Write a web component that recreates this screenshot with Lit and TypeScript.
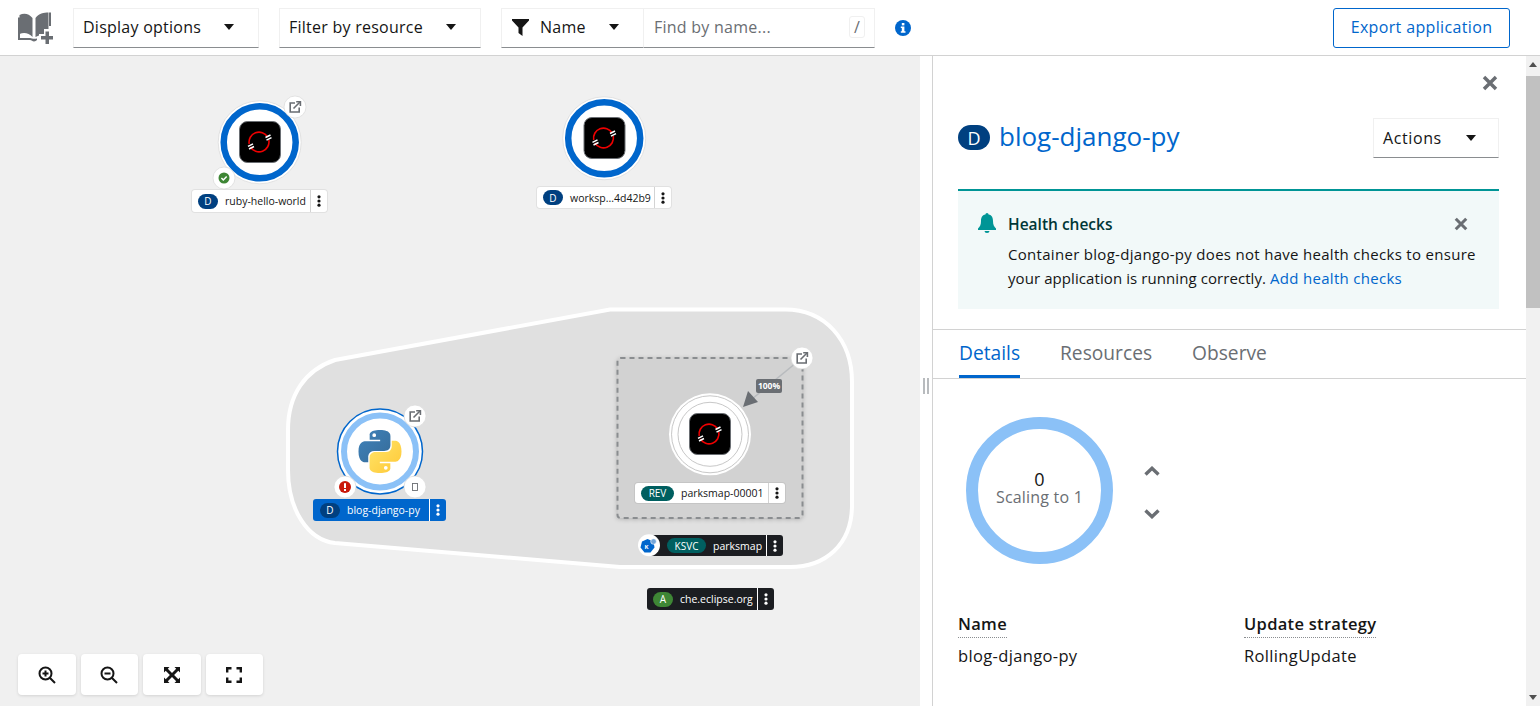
import { LitElement, css, html, svg } from "lit";
import { customElement } from "lit/decorators.js";

interface NodeLabel {
  left: number;
  top: number;
  width: number;
  height: number;
  badge: string;
  badgeWidth: number;
  badgeColor: string;
  badgeOffset: number;
  text: string;
  theme: "light" | "dark" | "selected";
}

const labels: NodeLabel[] = [
  { left: 192, top: 190, width: 135, height: 22, badge: "D", badgeWidth: 20, badgeColor: "#004080", badgeOffset: 6, text: "ruby-hello-world", theme: "light" },
  { left: 537, top: 187, width: 134, height: 21, badge: "D", badgeWidth: 20, badgeColor: "#004080", badgeOffset: 6, text: "worksp...4d42b9", theme: "light" },
  { left: 313, top: 499, width: 133, height: 22, badge: "D", badgeWidth: 20, badgeColor: "#004080", badgeOffset: 7, text: "blog-django-py", theme: "selected" },
  { left: 635, top: 483, width: 150, height: 20, badge: "REV", badgeWidth: 33, badgeColor: "#005f60", badgeOffset: 6, text: "parksmap-00001", theme: "light" },
  { left: 650, top: 535, width: 133, height: 21, badge: "KSVC", badgeWidth: 39, badgeColor: "#005f60", badgeOffset: 17, text: "parksmap", theme: "dark" },
  { left: 647, top: 588, width: 127, height: 22, badge: "A", badgeWidth: 20, badgeColor: "#3e8635", badgeOffset: 6, text: "che.eclipse.org", theme: "dark" },
];

const caret = html`<svg class="caret" width="10" height="6" viewBox="0 0 10 6"><path d="M0 0h10L5 6z" fill="#151515" /></svg>`;

const closeIcon = (size: number) => html`<svg width=${size} height=${size} viewBox="0 0 12 12">
  <path d="M1.500 1.500l9 9M10.500 1.500l-9 9" stroke="#6a6e73" stroke-width="2.600" fill="none" />
</svg>`;

// dark tile with the red ring and white slashes, used by the three image nodes
const tile = (cx: number, cy: number) => svg`
  <rect x=${cx - 20.5} y=${cy - 20.5} width="41" height="41" rx="8" fill="#000" stroke="#6a6e73" stroke-width="1" />
  <g transform="translate(${cx - 1} ${cy})" fill="none">
    <path d="M8.600 -5A10 10 0 0 0 -9.800 2" stroke="#e00" stroke-width="1.600" />
    <path d="M-8.600 5A10 10 0 0 0 9.800 -2" stroke="#e00" stroke-width="1.600" />
    <path d="M6.500 -4.500l5 -2.500M7.500 -1.800l5 -2.500M-11 4.300l5 -2.500M-10 7l5 -2.500" stroke="#fff" stroke-width="1.500" />
  </g>
`;

const decorator = (cx: number, cy: number, inner: unknown) => svg`
  <circle cx=${cx} cy=${cy} r="11" fill="#fff" stroke="#dcdcdc" stroke-width="0.800" />
  ${inner}
`;

const extLink = (cx: number, cy: number) =>
  decorator(
    cx,
    cy,
    svg`<g transform="translate(${cx - 6} ${cy - 6})" fill="none" stroke="#6a6e73" stroke-width="1.600">
      <path d="M6 2H1.200v9h9V6.500" />
      <path d="M4.500 7.500L11 1" />
      <path d="M7.200 .8H11.400V5" />
    </g>`
  );

const pythonLogo = (x: number, y: number, size: number) => {
  const blue =
    "M54.900 0C26.800 0 28.600 12.200 28.600 12.200v12.600h26.800v3.800H17.900S0 26.600 0 55s15.600 27.400 15.600 27.400h9.300V69.200s-.5-15.600 15.400-15.600h26.500s14.900.2 14.900-14.400V15S84 0 54.900 0zM40.200 8.500a4.800 4.800 0 1 1 0 9.600 4.800 4.800 0 0 1 0-9.600z";
  return svg`
    <defs>
      <linearGradient id="py-blue" x1="0" y1="0" x2="1" y2="1">
        <stop offset="0" stop-color="#3f83bb" /><stop offset="1" stop-color="#366b98" />
      </linearGradient>
      <linearGradient id="py-yellow" x1="0" y1="0" x2="1" y2="1">
        <stop offset="0" stop-color="#ffc836" /><stop offset="1" stop-color="#ffe56a" />
      </linearGradient>
    </defs>
    <g transform="translate(${x} ${y}) scale(${size / 110})">
      <path d=${blue} fill="url(#py-blue)" fill-rule="evenodd" />
      <path d=${blue} fill="url(#py-yellow)" fill-rule="evenodd" transform="rotate(180 55 55)" />
    </g>
  `;
};

@customElement("app-root")
export class AppRoot extends LitElement {
  static styles = css`
    :host {
      display: block;
      width: 1540px;
      height: 706px;
      overflow: hidden;
      background: #fff;
      color: #151515;
      font-family: "Open Sans", "Liberation Sans", sans-serif;
      font-size: 15px;
    }
    .toolbar {
      height: 55px;
      border-bottom: 1px solid #d2d2d2;
      display: flex;
      align-items: center;
      padding: 0 30px 0 18px;
      width: 1492px;
      font-size: 16px;
      letter-spacing: 0.25px;
    }
    .book {
      width: 35px;
      height: 32px;
      margin-right: 20px;
      flex: none;
    }
    .select {
      height: 40px;
      box-sizing: border-box;
      border: 1px solid #f0f0f0;
      border-bottom-color: #8a8d90;
      display: flex;
      align-items: center;
      justify-content: space-between;
      padding: 0 24px 1px 9px;
      flex: none;
    }
    .display {
      width: 186px;
      margin-right: 20px;
    }
    .resource {
      width: 202px;
      margin-right: 20px;
    }
    .name {
      width: 143px;
      padding-left: 10px;
    }
    .name svg.funnel {
      margin-right: 11px;
    }
    .name span {
      flex: 1;
    }
    .find {
      width: 231px;
      height: 40px;
      box-sizing: border-box;
      border: 1px solid #f0f0f0;
      border-left: 0;
      border-bottom-color: #8a8d90;
      display: flex;
      align-items: center;
      justify-content: space-between;
      padding: 0 9px 1px 10px;
      color: #6a6e73;
      flex: none;
    }
    .find kbd {
      width: 16px;
      height: 22px;
      box-sizing: border-box;
      border: 1px solid #f0f0f0;
      border-radius: 3px;
      display: flex;
      align-items: center;
      justify-content: center;
      font: inherit;
    }
    .info {
      margin-left: 20px;
      flex: none;
    }
    .export {
      margin-left: auto;
      width: 177px;
      height: 40px;
      box-sizing: border-box;
      border: 1px solid #06c;
      border-radius: 3px;
      color: #06c;
      display: flex;
      align-items: center;
      justify-content: center;
      padding-bottom: 1px;
      letter-spacing: 0.35px;
    }
    .body {
      display: flex;
      height: 650px;
    }
    .canvas {
      position: relative;
      width: 920px;
      flex: none;
      background: #f0f0f0;
      overflow: hidden;
    }
    .graph {
      position: absolute;
      left: 0;
      top: 0;
    }
    .box {
      filter: drop-shadow(0 1px 2px rgba(0, 0, 0, 0.2));
    }
    .label {
      position: absolute;
      box-sizing: border-box;
      display: flex;
      align-items: center;
      border-radius: 3px;
      font-size: 10.5px;
      white-space: nowrap;
    }
    .label.light {
      background: #fff;
      box-shadow: 0 0 0 1px rgba(0, 0, 0, 0.06);
      color: #151515;
    }
    .label.dark {
      background: #1b1d21;
      color: #fff;
    }
    .label.selected {
      background: #06c;
      color: #fff;
    }
    .label .tag {
      flex: none;
      height: 15px;
      margin-right: 7px;
      border-radius: 8px;
      color: #fff;
      display: flex;
      align-items: center;
      justify-content: center;
      font-size: 10px;
    }
    .label .text {
      flex: 1;
    }
    .label .kebab {
      flex: none;
      width: 16px;
      align-self: stretch;
      border-left: 1px solid rgba(128, 128, 128, 0.35);
      display: flex;
      align-items: center;
      justify-content: center;
    }
    .label.selected .kebab,
    .label.dark .kebab {
      border-left-color: #fff;
    }
    .ksvc {
      position: absolute;
      left: 637px;
      top: 478px;
    }
    .zoom-bar {
      position: absolute;
      left: 18px;
      bottom: 11px;
      display: flex;
      gap: 5px;
    }
    .zoom-bar div {
      width: 57.5px;
      height: 41px;
      background: #fff;
      border-radius: 4px;
      box-shadow: 0 1px 3px rgba(0, 0, 0, 0.12);
      display: flex;
      align-items: center;
      justify-content: center;
    }
    .splitter {
      width: 13px;
      flex: none;
      border-right: 1px solid #d2d2d2;
      display: flex;
      justify-content: center;
      padding: 322px 1px 0 0;
      box-sizing: border-box;
    }
    .splitter i {
      width: 6px;
      height: 16px;
      box-sizing: border-box;
      border-left: 2px solid #b8bbbe;
      border-right: 2px solid #b8bbbe;
    }
    .panel {
      flex: 1;
      min-width: 0;
      overflow: hidden;
    }
    .panel-close {
      display: flex;
      justify-content: flex-end;
      padding: 19px 28px 0 0;
      height: 15px;
    }
    .head {
      display: flex;
      align-items: center;
      justify-content: space-between;
      padding: 28px 27px 0 25px;
    }
    .title {
      display: flex;
      align-items: center;
      font-size: 26px;
      color: #06c;
      gap: 9px;
    }
    .title span {
      margin-top: -4px;
    }
    .title b {
      width: 32px;
      height: 25px;
      margin-top: -1px;
      border-radius: 13px;
      background: #004080;
      color: #fff;
      font-size: 18px;
      font-weight: 400;
      display: flex;
      align-items: center;
      justify-content: center;
    }
    .actions {
      width: 126px;
      padding-right: 22px;
      background: #fff;
      font-size: 16px;
      letter-spacing: 0.6px;
    }
    .alert {
      margin: 31px 27px 0 25px;
      border-top: 2px solid #009596;
      background: #f2f9f9;
      height: 120px;
      box-sizing: border-box;
      padding: 22px 23px 0 50px;
      position: relative;
      line-height: 24px;
    }
    .alert h4 {
      margin: 0 0 7px;
      font-size: 15.5px;
      font-weight: 600;
      color: #003737;
      line-height: 22px;
      display: flex;
      justify-content: space-between;
      align-items: center;
      padding-right: 8px;
    }
    .alert .bell {
      position: absolute;
      left: 20px;
      top: 22px;
    }
    .line-a {
      display: block;
      letter-spacing: 0.3px;
      white-space: nowrap;
    }
    .line-b {
      letter-spacing: 0.08px;
    }
    .alert a {
      color: #06c;
      letter-spacing: 0.3px;
    }
    .tabs {
      margin-top: 20px;
      border-top: 1px solid #d2d2d2;
      border-bottom: 1px solid #d2d2d2;
      height: 48px;
      display: flex;
      gap: 40px;
      padding-left: 26px;
      color: #6a6e73;
      font-size: 19.2px;
    }
    .tabs span {
      display: flex;
      align-items: center;
      box-sizing: border-box;
      height: 48px;
      padding-bottom: 3px;
    }
    .tabs .active {
      color: #06c;
      border-bottom: 3px solid #06c;
      padding-bottom: 0;
    }
    .scale {
      display: flex;
      align-items: center;
      padding: 38px 0 0 33px;
      gap: 31px;
    }
    .donut {
      width: 147px;
      height: 147px;
      box-sizing: border-box;
      border: 12px solid #8bc1f7;
      border-radius: 50%;
      display: flex;
      flex-direction: column;
      align-items: center;
      justify-content: center;
      color: #6a6e73;
      line-height: 18px;
      padding-bottom: 6px;
      font-size: 16px;
      letter-spacing: 0.2px;
    }
    .donut strong {
      font-weight: 400;
      color: #151515;
      font-size: 18px;
    }
    .arrows {
      display: flex;
      flex-direction: column;
      gap: 33px;
      margin-top: 3px;
    }
    .details {
      display: grid;
      grid-template-columns: 286px 1fr;
      margin: 0;
      padding: 48px 0 0 25px;
      font-size: 16.5px;
    }
    .details dt {
      font-weight: 600;
      line-height: 24px;
      letter-spacing: 0.3px;
    }
    .details dt span {
      border-bottom: 1px dotted #8a8d90;
      display: inline-block;
      padding-bottom: 1px;
    }
    .details dd {
      margin: 6px 0 0;
      line-height: 24px;
      letter-spacing: 0.35px;
    }
    .scrollbar {
      width: 14px;
      flex: none;
      background: #f1f1f1;
      position: relative;
    }
    .scrollbar .thumb {
      position: absolute;
      left: 0;
      right: 0;
      top: 20px;
      height: 232px;
      background: #c1c1c1;
    }
    .scrollbar svg {
      position: absolute;
      left: 3px;
    }
  `;

  private renderLabel(l: NodeLabel) {
    const dot = l.theme === "light" ? "#151515" : "#fff";
    return html`<div
      class="label ${l.theme}"
      style="left:${l.left}px;top:${l.top - 56}px;width:${l.width}px;height:${l.height}px;padding-left:${l.badgeOffset}px"
    >
      <span class="tag" style="width:${l.badgeWidth}px;background:${l.badgeColor}">${l.badge}</span>
      <span class="text">${l.text}</span>
      <span class="kebab">
        <svg width="4" height="12" viewBox="0 0 4 12" fill=${dot}>
          <circle cx="2" cy="1.800" r="1.600" /><circle cx="2" cy="6" r="1.600" /><circle cx="2" cy="10.200" r="1.600" />
        </svg>
      </span>
    </div>`;
  }

  private renderGraph() {
    return html`<svg class="graph" width="920" height="650" viewBox="0 56 920 650">
      <path
        d="M610 309.500H785C825 309.500 852 340 852 382V505C852 545 825 567 790 567H620L335 543C308 540 288 510 288 470V430C288 395 305 370 335 360Z"
        fill="#e0e0e0"
        stroke="#fff"
        stroke-width="4"
      />

      <circle cx="259.700" cy="142.300" r="41.500" fill="#fff" stroke="#dcdcdc" stroke-width="0.800" />
      <circle cx="259.700" cy="142.300" r="36" fill="#fff" stroke="#06c" stroke-width="6.500" />
      ${tile(260, 142)} ${extLink(295, 107)}
      ${decorator(224, 178, svg`<circle cx="224" cy="178" r="5.500" fill="#3e8635" />
        <path d="M221.400 178l1.900 2 3.400-3.600" stroke="#fff" stroke-width="1.500" fill="none" />`)}

      <circle cx="604.200" cy="138.300" r="41.500" fill="#fff" stroke="#dcdcdc" stroke-width="0.800" />
      <circle cx="604.200" cy="138.300" r="36" fill="#fff" stroke="#06c" stroke-width="6.500" />
      ${tile(604.500, 138)}

      <circle cx="380" cy="451.500" r="42.500" fill="#fff" stroke="#06c" stroke-width="1.500" />
      <circle cx="380" cy="451.500" r="36" fill="#fff" stroke="#8bc1f7" stroke-width="6" />
      ${pythonLogo(358.500, 430, 43)} ${extLink(415, 416)}
      ${decorator(345, 487, svg`<circle cx="345" cy="487" r="6" fill="#c9190b" />
        <rect x="344" y="483.200" width="2" height="4.800" fill="#fff" /><rect x="344" y="489" width="2" height="2" fill="#fff" />`)}
      ${decorator(415, 487, svg`<rect x="412.500" y="483.500" width="5" height="7" fill="none" stroke="#6a6e73" stroke-width="0.900" />`)}

      <rect class="box" x="617.500" y="358" width="185" height="160" rx="3" fill="#d2d2d2" stroke="#8a8d90" stroke-width="2" stroke-dasharray="5 4" />
      <path d="M802 358L752 399" stroke="#b8bbbe" stroke-width="1.500" />
      <path d="M743 407L748 391L758 402Z" fill="#6a6e73" />
      <rect x="756" y="379" width="26" height="14" rx="2" fill="#6a6e73" />
      <text x="769" y="389.300" text-anchor="middle" fill="#fff" font-size="8.500" font-weight="700">100%</text>
      <circle cx="710" cy="434.300" r="41" fill="#fff" />
      <circle cx="710" cy="434.300" r="38.500" fill="none" stroke="#c8c8c8" stroke-width="1" />
      <circle cx="710" cy="434.300" r="32" fill="none" stroke="#c8c8c8" stroke-width="1" />
      ${tile(710, 434)} ${extLink(802, 358)}
    </svg>`;
  }

  render() {
    return html`
      <div class="toolbar">
        <svg class="book" viewBox="0 0 35 32" fill="#6a6e73">
          <path d="M1.500 3C6 .5 11 1.500 14.500 6V25C11 21 6 20 1.500 22Z" />
          <path d="M17.500 6C20.500 1.500 26 .5 30.500 .5V17H26V22H21V23.500L17.500 25Z" />
          <path d="M0 5.500V28H12C13.500 28 14.500 29.500 16 29.500S18 28.500 19 28V26.500C15 27.500 14 26 12 26H2V5.500Z" />
          <path d="M31 .5H33V14H31Z" />
          <path d="M27.500 19.500H31V24H35V27.500H31V32H27.500V27.500H23V24H27.500Z" />
        </svg>
        <div class="select display"><span>Display options</span>${caret}</div>
        <div class="select resource"><span>Filter by resource</span>${caret}</div>
        <div class="select name">
          <svg class="funnel" width="17" height="17" viewBox="0 0 17 17">
            <path d="M0 0h17v1.500L10.500 8.500V17L6.500 14V8.500L0 1.500z" fill="#151515" />
          </svg>
          <span>Name</span>${caret}
        </div>
        <div class="find"><span>Find by name...</span><kbd>/</kbd></div>
        <svg class="info" width="16" height="16" viewBox="0 0 16 16">
          <circle cx="8" cy="8" r="8" fill="#06c" />
          <rect x="6.800" y="3" width="2.600" height="2.400" fill="#fff" />
          <path d="M5.800 6.500h3.600v4.800h1.100v1.500H5.800v-1.500h1v-3.300h-1z" fill="#fff" />
        </svg>
        <div class="export">Export application</div>
      </div>
      <div class="body">
        <div class="canvas">
          ${this.renderGraph()} ${labels.map((l) => this.renderLabel(l))}
          <svg class="ksvc" width="24" height="24" viewBox="0 0 24 24">
            <circle cx="12" cy="11.300" r="11" fill="#fff" />
            <path d="M10.500 5l6 2.500 1 6-4 5h-6l-4-5 1.500-6z" fill="#06c" />
            <circle cx="16.500" cy="7.500" r="2.800" fill="#73a5d9" stroke="#fff" stroke-width="0.600" />
            <text x="9.500" y="15" text-anchor="middle" fill="#fff" font-size="6" font-weight="700">K</text>
          </svg>
          <div class="zoom-bar">
            <div>
              <svg width="18" height="18" viewBox="0 0 18 18" fill="none" stroke="#151515" stroke-width="2">
                <circle cx="7.500" cy="7.500" r="6" /><path d="M12 12l5 5M4.500 7.500h6M7.500 4.500v6" />
              </svg>
            </div>
            <div>
              <svg width="18" height="18" viewBox="0 0 18 18" fill="none" stroke="#151515" stroke-width="2">
                <circle cx="7.500" cy="7.500" r="6" /><path d="M12 12l5 5M4.500 7.500h6" />
              </svg>
            </div>
            <div>
              <svg width="16" height="16" viewBox="0 0 16 16" fill="#151515">
                <path d="M0 0h5.500L3.800 1.700 8 5.900 12.200 1.700 10.500 0H16v5.500L14.300 3.800 10.100 8l4.200 4.200L16 10.500V16h-5.500l1.700-1.700L8 10.100l-4.200 4.200L5.500 16H0v-5.500l1.700 1.700L5.900 8 1.700 3.800 0 5.500z" />
              </svg>
            </div>
            <div>
              <svg width="16" height="16" viewBox="0 0 16 16" fill="none" stroke="#151515" stroke-width="2.400">
                <path d="M1.200 5.500V1.200H5.500M10.500 1.200h4.300V5.500M14.800 10.500v4.300H10.500M5.500 14.800H1.200V10.500" />
              </svg>
            </div>
          </div>
        </div>
        <div class="splitter"><i></i></div>
        <div class="panel">
          <div class="panel-close">${closeIcon(16)}</div>
          <div class="head">
            <div class="title"><b>D</b><span>blog-django-py</span></div>
            <div class="select actions"><span>Actions</span>${caret}</div>
          </div>
          <div class="alert">
            <svg class="bell" width="18" height="20" viewBox="0 0 18 20" fill="#009596">
              <path d="M9 0a1.600 1.600 0 0 1 1.600 1.600C14 2.300 15 5 15 8c0 4 1 5.500 3 7.500V17H0v-1.500C2 13.500 3 12 3 8c0-3 1-5.700 4.400-6.400A1.600 1.600 0 0 1 9 0z" />
              <path d="M6.500 18h5a2.500 2 0 0 1-5 0z" />
            </svg>
            <h4><span>Health checks</span>${closeIcon(14)}</h4>
            <span class="line-a">Container blog-django-py does not have health checks to ensure</span>
            <span class="line-b">your application is running correctly.</span>
            <a>Add health checks</a>
          </div>
          <div class="tabs">
            <span class="active">Details</span><span>Resources</span><span>Observe</span>
          </div>
          <div class="scale">
            <div class="donut"><strong>0</strong><span>Scaling to 1</span></div>
            <div class="arrows">
              <svg width="16" height="10" viewBox="0 0 16 10" fill="none" stroke="#6a6e73" stroke-width="3.400">
                <path d="M1.500 8.500L8 2.300l6.500 6.200" />
              </svg>
              <svg width="16" height="10" viewBox="0 0 16 10" fill="none" stroke="#6a6e73" stroke-width="3.400">
                <path d="M1.500 1.500L8 7.700l6.500-6.200" />
              </svg>
            </div>
          </div>
          <dl class="details">
            <div>
              <dt><span>Name</span></dt>
              <dd>blog-django-py</dd>
            </div>
            <div>
              <dt><span>Update strategy</span></dt>
              <dd>RollingUpdate</dd>
            </div>
          </dl>
        </div>
        <div class="scrollbar">
          <svg style="top:6px" width="8" height="5" viewBox="0 0 8 5"><path d="M4 0l4 5H0z" fill="#505050" /></svg>
          <div class="thumb"></div>
          <svg style="bottom:6px" width="8" height="5" viewBox="0 0 8 5"><path d="M4 5L8 0H0z" fill="#505050" /></svg>
        </div>
      </div>
    `;
  }
}

declare global {
  interface HTMLElementTagNameMap {
    "app-root": AppRoot;
  }
}
